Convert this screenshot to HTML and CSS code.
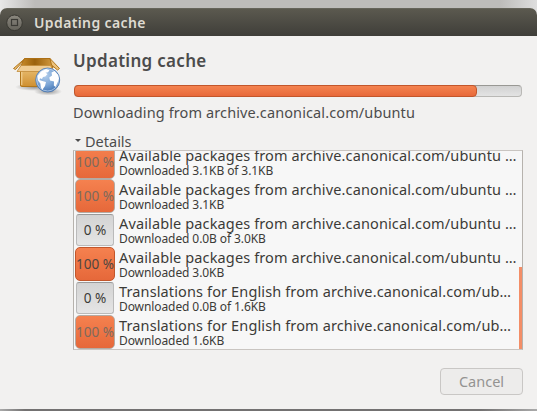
FILE: index.html
```html
<!DOCTYPE html>
<html lang="en">
<head>
<meta charset="utf-8">
<title>Updating cache</title>
<link rel="stylesheet" href="styles.css">
</head>
<body>
<div class="window">
  <header class="titlebar">
    <svg class="winbtn" width="18" height="18" viewBox="0 0 18 18"><defs><linearGradient id="wb" x2="0" y2="1"><stop stop-color="#8b887f"/><stop offset="1" stop-color="#64625a"/></linearGradient></defs><circle cx="9.5" cy="8.8" r="7.8" fill="url(#wb)" stroke="#393832"/><rect x="6.5" y="5.5" width="6" height="6" fill="none" stroke="#3b3a35" stroke-width="1.2"/></svg>
    <span class="wintitle">Updating cache</span>
  </header>
  <div class="content">
    <svg class="icon" width="50" height="42" viewBox="0 0 50 42">
      <defs>
        <linearGradient id="box" x2="0" y2="1"><stop stop-color="#e9bd72"/><stop offset="1" stop-color="#cf9030"/></linearGradient>
        <linearGradient id="ins" x2="1" y2="0"><stop stop-color="#cb8e2c"/><stop offset=".45" stop-color="#9b620c"/><stop offset="1" stop-color="#d39a40"/></linearGradient>
        <radialGradient id="sea" cx=".4" cy=".3" r=".75"><stop stop-color="#b5cfec"/><stop offset=".55" stop-color="#7ba5d6"/><stop offset="1" stop-color="#3e70b0"/></radialGradient>
        <radialGradient id="sh"><stop stop-color="#555" stop-opacity=".6"/><stop offset="1" stop-color="#555" stop-opacity="0"/></radialGradient>
      </defs>
      <ellipse cx="23" cy="33" rx="20" ry="4" fill="url(#sh)"/>
      <ellipse cx="36" cy="37.5" rx="14" ry="4" fill="url(#sh)"/>
      <path d="M8.5 14H39V32.5H9.5Q8.5 32.5 8.5 31Z" fill="url(#box)" stroke="#b1761a"/>
      <path d="M9.8 18V31" stroke="#f5d79d"/>
      <path d="M12.5 4.5H38L41 14H8Z" fill="url(#ins)" stroke="#ad7016"/>
      <path d="M13 4.5L8.5 10L3.5 15.5L1.5 14.5Z" fill="#edc27b" stroke="#b1761a"/>
      <path d="M38 4.5L47.5 14.5L45.5 16L39.5 11Z" fill="#edc27b" stroke="#b1761a"/>
      <path d="M9 11.5H38.5L42 17.5H5Z" fill="#f0cd93" stroke="#c28c39" stroke-width=".8"/>
      <circle cx="35.7" cy="26" r="12" fill="url(#sea)" stroke="#4c7ab4" stroke-width=".8"/>
      <circle cx="35.7" cy="26" r="11" fill="none" stroke="#cbdcf1" stroke-opacity=".7"/>
      <path d="M25.5 22L29 17.5L34 15L37.5 16.2L36 18.2L33.5 18.8L35.5 20L33.3 22.5L31 23L30 25L28 24.3L27.5 26L29.5 26.8L34 28L33 32L30.2 36L28.7 33L28.4 29.5L26 26.5Z" fill="#fff"/>
      <path d="M39.5 18.5L42.5 17L46 20.8L47 24.5L45.5 29L43.5 33L41.8 31.5L42 27.5L38 26.5L37.3 23.5L40 21.5Z" fill="#fff"/>
    </svg>
    <main class="main">
      <h1 class="heading">Updating cache</h1>
      <div class="progress"><div class="bar"></div></div>
      <p class="status">Downloading from archive.canonical.com/ubuntu</p>
      <div class="expander"><i class="arrow"></i><span>Details</span></div>
      <div class="list">
        <div class="rows">
          <div class="row"><div class="cell full"><span>100 %</span></div><div class="text"><div class="name">Available packages from archive.canonical.com/ubuntu …</div><div class="sub">Downloaded 3.1KB of 3.1KB</div></div></div>
          <div class="row"><div class="cell full"><span>100 %</span></div><div class="text"><div class="name">Available packages from archive.canonical.com/ubuntu …</div><div class="sub">Downloaded 3.1KB</div></div></div>
          <div class="row"><div class="cell"><span>0 %</span></div><div class="text"><div class="name">Available packages from archive.canonical.com/ubuntu …</div><div class="sub">Downloaded 0.0B of 3.0KB</div></div></div>
          <div class="row"><div class="cell full current"><span>100 %</span></div><div class="text"><div class="name">Available packages from archive.canonical.com/ubuntu …</div><div class="sub">Downloaded 3.0KB</div></div></div>
          <div class="row"><div class="cell"><span>0 %</span></div><div class="text"><div class="name">Translations for English from archive.canonical.com/ub…</div><div class="sub">Downloaded 0.0B of 1.6KB</div></div></div>
          <div class="row"><div class="cell full"><span>100 %</span></div><div class="text"><div class="name">Translations for English from archive.canonical.com/ub…</div><div class="sub">Downloaded 1.6KB</div></div></div>
        </div>
        <div class="scroll"></div>
      </div>
      <button class="cancel" disabled>Cancel</button>
    </main>
  </div>
</div>
<div class="desktop"></div>
</body>
</html>
```
FILE: styles.css
```css
* { box-sizing: border-box; }
body {
  margin: 0;
  width: 537px;
  height: 411px;
  overflow: hidden;
  display: flex;
  flex-direction: column;
  padding-top: 8px;
  background: linear-gradient(90deg, #e8e8e8, #bdbcba 35px, #bdbcba 500px, #dedede);
  font-family: "Noto Sans", "Open Sans", sans-serif;
  color: #3c3b37;
}
.window { height: 401px; background: #f2f1f0; border-radius: 7px 7px 0 0; overflow: hidden; }
.titlebar {
  height: 28px;
  display: flex;
  align-items: center;
  padding-left: 5px;
  background: linear-gradient(#5b594f, #3f3e39);
  border-top: 1px solid #65645a;
}
.wintitle { margin-left: 11px; font-size: 14px; font-weight: 600; line-height: 20px; color: #dfdbd2; white-space: nowrap; letter-spacing: .38px; }
.content { display: flex; padding: 12px 14px 0 12px; height: 373px; }
.icon { flex: none; margin-top: 6px; }
.main { width: 450px; margin-left: 11px; display: flex; flex-direction: column; }
.heading { margin: 0; height: 37px; font-size: 17px; font-weight: 600; line-height: 26px; white-space: nowrap; color: #4c4c4c; letter-spacing: .3px; }
.progress {
  height: 12px;
  margin-left: 1px;
  width: 448px;
  border: 1px solid #b9b8b5;
  border-top-color: #999894;
  border-radius: 4px;
  background: linear-gradient(#d2d2d2, #e3e3e3);
}
.bar { width: 403px; height: 12px; margin: -1px; border: 1px solid #c2562b; border-radius: 4px; background: linear-gradient(#f4834f, #e8693a); }
.status { margin: 5px 0 0; height: 22px; font-size: 14.5px; line-height: 20px; white-space: nowrap; color: #4c4c4c; letter-spacing: .11px; }
.expander { display: flex; height: 26px; padding-top: 8px; font-size: 14.5px; line-height: 19px; color: #4c4c4c; }
.arrow { width: 0; height: 0; margin: 7px 4px 0 2px; border: 3px solid transparent; border-top: 3px solid #4c4c4c; border-bottom: 0; }
.list {
  position: relative;
  height: 200px;
  flex: none;
  display: flex;
  flex-direction: column;
  justify-content: flex-end;
  overflow: hidden;
  border: 1px solid #b6b2ad;
  border-top-color: #c9c5c1;
  border-bottom-color: #c9c5c1;
  background: #f7f7f7;
}
.rows { flex: none; }
.row { display: flex; height: 34px; padding-left: 1px; }
.cell {
  flex: none;
  width: 38px;
  height: 32px;
  margin: 1px;
  display: flex;
  align-items: center;
  justify-content: center;
  padding-bottom: 2px;
  border: 1px solid #bababa;
  border-top-color: #999;
  border-radius: 3px;
  background: linear-gradient(#d3d3d3, #e5e5e5);
  font-size: 13.6px;
  white-space: nowrap;
}
.full { width: 40px; height: 34px; margin: 0; border-color: #b4aaa3; border-radius: 5px; background: linear-gradient(#f5814f, #e6683a); color: #7c6a5e; }
.current { border-color: #c2562b; color: #4f4540; }
.text { padding-left: 4px; white-space: nowrap; }
.name { height: 19px; font-size: 14.5px; line-height: 20px; letter-spacing: .13px; }
.sub { height: 14px; font-size: 12px; line-height: 13px; letter-spacing: -.09px; }
.scroll { position: absolute; right: 0; bottom: 0; width: 3px; height: 82px; background: #f38e67; }
.cancel {
  align-self: flex-end;
  flex: none;
  width: 83px;
  height: 27px;
  margin-top: 18px;
  padding: 0 0 2px;
  border: 1px solid #c9c7c5;
  border-radius: 4px;
  background: #edeceb;
  color: #949391;
  font: 14.5px/22px "Noto Sans", sans-serif;
}
.desktop { height: 2px; background: linear-gradient(90deg, #aaa, #737171 25px, #737171 480px, #aaa); }
```
